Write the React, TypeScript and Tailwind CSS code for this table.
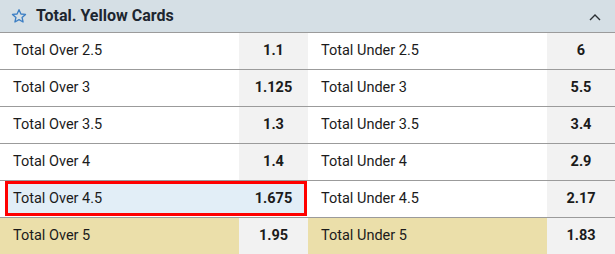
import React from "react";

type Row = { l: string; lo: string; r: string; ro: string; hl?: boolean; yellow?: boolean };

const rows: Row[] = [
  { l: "Total Over 2.5", lo: "1.1", r: "Total Under 2.5", ro: "6" },
  { l: "Total Over 3", lo: "1.125", r: "Total Under 3", ro: "5.5" },
  { l: "Total Over 3.5", lo: "1.3", r: "Total Under 3.5", ro: "3.4" },
  { l: "Total Over 4", lo: "1.4", r: "Total Under 4", ro: "2.9" },
  { l: "Total Over 4.5", lo: "1.675", r: "Total Under 4.5", ro: "2.17", hl: true },
  { l: "Total Over 5", lo: "1.95", r: "Total Under 5", ro: "1.83", yellow: true },
];

function Half({ label, odds, yellow, hl }: { label: string; odds: string; yellow?: boolean; hl?: boolean }) {
  return (
    <div className="relative flex h-full">
      {hl && (
        <div className="absolute left-[5px] top-0 right-[1px] bottom-[1px] border-[3px] border-[#ff0000] bg-[#e2eef7]" />
      )}
      <div
        className={
          "relative flex w-[239px] items-center pl-[13px] " + (yellow ? "bg-[#ebdfaa]" : "")
        }
      >
        {label}
      </div>
      <div
        className={
          "relative flex flex-1 items-center justify-center font-bold " + (hl ? "" : "bg-[#f2f2f2]")
        }
      >
        {odds}
      </div>
    </div>
  );
}

export default function App() {
  return (
    <div
      className="w-[615px] h-[254px] bg-white text-[#1b1b1b] text-[14.5px]"
      style={{ fontFamily: "Roboto, 'Liberation Sans', sans-serif" }}
    >
      <div className="flex h-[32px] items-center bg-[#d5dfe5] pl-[11px] pr-[14px]">
        <svg width="16" height="16" viewBox="0 0 24 24" fill="none" stroke="#3d7fc4" strokeWidth="2" strokeLinejoin="round">
          <polygon points="12,2.5 14.9,9 21.8,9.6 16.6,14.2 18.1,21 12,17.5 5.9,21 7.4,14.2 2.2,9.6 9.1,9" />
        </svg>
        <span className="ml-[9px] text-[16px] font-bold text-[#1d2630]">Total. Yellow Cards</span>
        <svg className="ml-auto mt-[2px]" width="12" height="8" viewBox="0 0 12 8" fill="none" stroke="#2a2f33" strokeWidth="1.4">
          <polyline points="1,7 6,2 11,7" />
        </svg>
      </div>
      {rows.map((r, i) => (
        <div key={i} className="grid h-[37px] grid-cols-[308px_307px] border-t border-[#9b9b9b]">
          <Half label={r.l} odds={r.lo} yellow={r.yellow} hl={r.hl} />
          <Half label={r.r} odds={r.ro} yellow={r.yellow} />
        </div>
      ))}
    </div>
  );
}
